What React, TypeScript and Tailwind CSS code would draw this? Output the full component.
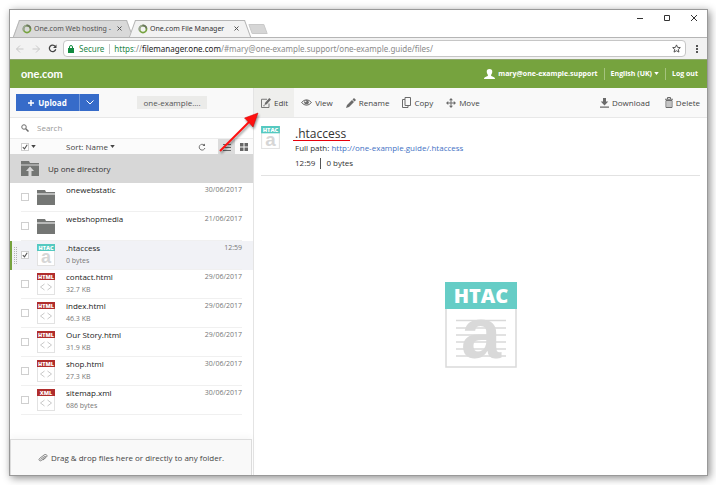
import { useState } from "react";
import clsx from "clsx";

interface FileEntry {
  name: string;
  size?: string;
  date: string;
  kind: "folder" | "htac" | "html" | "xml";
}

const FILES: FileEntry[] = [
  { name: "onewebstatic", date: "30/06/2017", kind: "folder" },
  { name: "webshopmedia", date: "21/06/2017", kind: "folder" },
  { name: ".htaccess", size: "0 bytes", date: "12:59", kind: "htac" },
  { name: "contact.html", size: "32.7 KB", date: "29/06/2017", kind: "html" },
  { name: "index.html", size: "46.3 KB", date: "29/06/2017", kind: "html" },
  { name: "Our Story.html", size: "31.9 KB", date: "29/06/2017", kind: "html" },
  { name: "shop.html", size: "27.3 KB", date: "30/06/2017", kind: "html" },
  { name: "sitemap.xml", size: "686 bytes", date: "30/06/2017", kind: "xml" },
];

const Caret = () => (
  <svg viewBox="0 0 6 4" className="h-[3px] w-[5px] shrink-0" fill="currentColor">
    <path d="M0 0h6L3 4z" />
  </svg>
);

const Favicon = () => (
  <svg viewBox="0 0 20 20" className="h-2.5 w-2.5 shrink-0" fill="none">
    <circle cx="10" cy="10" r="7" stroke="#76a33e" strokeWidth="3.500" />
    <path d="M3.500 13A7 7 0 0 1 9 3" stroke="#9aa395" strokeWidth="3.500" />
    <path d="M9 3A7 7 0 0 1 17 9" stroke="#6b7562" strokeWidth="3.500" />
  </svg>
);

const FolderIcon = () => (
  <svg viewBox="0 0 18 15" className="h-[15px] w-[18px]" fill="#747674">
    <path d="M0 0h8l1 2h9v1.500H0zM0 4.500h18V15H0z" />
  </svg>
);

const UpFolderIcon = () => (
  <svg viewBox="0 0 18 15" className="h-[15px] w-[18px]">
    <path d="M0 0h8l1 2h9v1.500H0zM0 4.500h18V15H0z" fill="#747674" />
    <path d="M9 5.500l4 4.500h-2.500v5h-3v-5H5z" fill="#d7d7d7" />
  </svg>
);

const CodeFileIcon = ({ label }: { label: string }) => (
  <svg viewBox="0 0 18 22" className="h-[22px] w-[18px]">
    <rect x=".5" y=".5" width="17" height="21" fill="#fff" stroke="#e2e2e2" />
    <rect width="18" height="7" fill="#b02d2d" />
    <text
      x="9"
      y="5.500"
      textAnchor="middle"
      fontSize="5.500"
      fontWeight="800"
      fill="#fff"
      className="font-['Open_Sans',sans-serif]"
    >
      {label}
    </text>
    <path d="M7.500 11L3.500 14l4 3M10.500 11l4 3-4 3" fill="none" stroke="#c9c9c9" />
  </svg>
);

const HtacIcon = () => (
  <svg viewBox="0 0 72 86" className="h-[86px] w-[72px] overflow-visible">
    <rect x="1" y="1" width="70" height="84" fill="#fff" stroke="#dadada" strokeWidth="1.500" />
    <rect width="72" height="27" fill="#66cdc6" />
    <text
      x="36"
      y="21"
      textAnchor="middle"
      fontSize="20"
      fontWeight="800"
      fill="#fff"
      className="font-['Open_Sans',sans-serif]"
    >
      HTAC
    </text>
    <path
      d="M11 38.500h50M11 46h50M11 53h50M11 60h50M11 67h50M11 74h50"
      stroke="#d9d9d9"
      strokeWidth="1.500"
    />
    <text
      x="36"
      y="76"
      textAnchor="middle"
      fontSize="72"
      fontWeight="700"
      fill="#d9d9d9"
      className="font-['Liberation_Sans',sans-serif]"
    >
      a
    </text>
  </svg>
);

const SmallHtacIcon = ({ className }: { className: string }) => (
  <svg viewBox="0 0 18 22" className={className}>
    <rect x=".5" y=".5" width="17" height="21" fill="#fff" stroke="#e2e2e2" />
    <rect width="18" height="7" fill="#55c9c0" />
    <text
      x="9"
      y="5.500"
      textAnchor="middle"
      fontSize="5.500"
      fontWeight="800"
      fill="#fff"
      className="font-['Open_Sans',sans-serif]"
    >
      HTAC
    </text>
    <text
      x="9"
      y="19"
      textAnchor="middle"
      fontSize="18"
      fontWeight="700"
      fill="#d6d6d6"
      className="font-['Liberation_Sans',sans-serif]"
    >
      a
    </text>
  </svg>
);

const EditIcon = () => (
  <svg viewBox="0 0 20 20" className="h-2.5 w-2.5" fill="none" stroke="#6b6b6b" strokeWidth="1.800">
    <path d="M12 2.500H1V19h15v-8" />
    <path d="M7 14l1.200-4.500L16.500 0 20 3l-8.500 9.500z" fill="#6b6b6b" stroke="none" />
    <path d="M4 15.500h4" strokeWidth="1.300" />
  </svg>
);

const ViewIcon = () => (
  <svg viewBox="0 0 22 14" className="h-[7px] w-[11px]">
    <path d="M1 7Q11-4 21 7 11 18 1 7z" fill="none" stroke="#6b6b6b" strokeWidth="2" />
    <circle cx="11" cy="6.500" r="4.500" fill="#6b6b6b" />
    <circle cx="9.500" cy="5" r="1.300" fill="#fff" />
  </svg>
);

const RenameIcon = () => (
  <svg viewBox="0 0 20 20" className="h-2.5 w-2.5" fill="#6b6b6b">
    <path d="M0 20l2-6L12 4l4 4L6 18zM13 3l3-3 4 4-3 3z" />
  </svg>
);

const CopyIcon = () => (
  <svg viewBox="0 0 18 22" className="h-[11px] w-[9px]" fill="none" stroke="#6b6b6b" strokeWidth="2">
    <path d="M6 1h11v16H6z" />
    <path d="M6 5H1v16h11v-4" />
  </svg>
);

const MoveIcon = () => (
  <svg viewBox="0 0 20 20" className="h-2.5 w-2.5" fill="#6b6b6b">
    <path d="M10 0l4 4.500h-3V9h4.500V6L20 10l-4.500 4v-3H11v4.500h3L10 20l-4-4.500h3V11H4.500v3L0 10l4.500-4v3H9V4.500H6z" />
  </svg>
);

const DownloadIcon = () => (
  <svg viewBox="0 0 18 20" className="h-2.5 w-[9px]" fill="#6b6b6b">
    <path d="M6 0h6v7h4.500L9 15 1.500 7H6zM0 17h18v2.500H0z" />
  </svg>
);

const DeleteIcon = () => (
  <svg viewBox="0 0 16 22" className="h-[11px] w-2" fill="none" stroke="#6b6b6b" strokeWidth="2">
    <path d="M0 4.500h16M5 4V1h6v3M2 7v14h12V7z" />
    <path d="M6 8v12M10 8v12" strokeWidth="1.500" />
  </svg>
);

const ACTIONS = [
  { label: "Edit", icon: <EditIcon /> },
  { label: "View", icon: <ViewIcon /> },
  { label: "Rename", icon: <RenameIcon /> },
  { label: "Copy", icon: <CopyIcon /> },
  { label: "Move", icon: <MoveIcon /> },
];

const Checkbox = ({
  label,
  checked,
  onChange,
}: {
  label: string;
  checked: boolean;
  onChange: () => void;
}) => (
  <label className="relative flex shrink-0">
    <input
      type="checkbox"
      aria-label={label}
      checked={checked}
      onChange={onChange}
      className="h-2 w-2 shrink-0 appearance-none border border-[#cfcfcf] bg-white"
    />
    {checked && (
      <svg
        viewBox="0 0 8 8"
        className="pointer-events-none absolute inset-0 h-2 w-2"
        fill="none"
        stroke="#555"
        strokeWidth="1.100"
      >
        <path d="M1.800 4.200l1.700 1.700 2.700-4.200" />
      </svg>
    )}
  </label>
);

const Tab = ({ title, active }: { title: string; active?: boolean }) => (
  <div
    className={clsx(
      "relative flex h-[17px] items-center pr-1 pl-[9px] text-[7px] leading-3",
      "before:absolute before:inset-y-0 before:left-[3px] before:w-1/2 before:-skew-x-[20deg] before:border-t before:border-l before:border-[#b5b5b5]",
      "after:absolute after:inset-y-0 after:right-[3px] after:w-1/2 after:skew-x-[20deg] after:border-t after:border-r after:border-[#b5b5b5]",
      active
        ? "z-10 -ml-1 w-[121px] text-[#333] before:bg-[#f2f2f2] after:bg-[#f2f2f2]"
        : "w-[120px] text-[#505050] before:bg-[#d9d9d9] after:bg-[#d9d9d9]",
    )}
  >
    <div className="relative z-10 flex min-w-0 flex-1 items-center gap-0.5">
      <Favicon />
      <span className="flex-1 whitespace-nowrap">{title}</span>
      <button aria-label="Close tab" className="w-3 text-[#555]">
        <svg viewBox="0 0 10 10" className="h-[5px] w-[5px]" stroke="currentColor" strokeWidth="2">
          <path d="M1 1l8 8M9 1L1 9" />
        </svg>
      </button>
    </div>
  </div>
);

const BrowserChrome = () => (
  <>
    <div className="flex h-7 shrink-0 items-start justify-between border-b border-[#b5b5b5] bg-white">
      <div className="mt-2.5 flex h-[17px] items-start pl-[3px] font-['Noto_Sans',sans-serif]">
        <Tab title="One.com Web hosting -" />
        <Tab title="One.com File Manager" active />
        <button
          aria-label="New tab"
          className="mt-1 h-2.5 w-4 skew-x-[20deg] rounded-[1px] border border-[#c9c9c9] bg-[#d6d6d6]"
        />
      </div>
      <div className="flex items-center gap-[19px] pt-1 pr-[9px] text-[#333]">
        <button aria-label="Minimise">
          <svg viewBox="0 0 8 8" className="h-2 w-2" stroke="currentColor">
            <path d="M1 4.500h6" />
          </svg>
        </button>
        <button aria-label="Maximise">
          <svg viewBox="0 0 8 8" className="h-2 w-2" stroke="currentColor" fill="none">
            <path d="M1.500 1.500h5v5h-5z" />
          </svg>
        </button>
        <button aria-label="Close">
          <svg viewBox="0 0 8 8" className="h-2 w-2" stroke="currentColor">
            <path d="M1 1l6 6M7 1L1 7" />
          </svg>
        </button>
      </div>
    </div>
    <div className="flex h-[21px] shrink-0 items-center bg-[#f2f2f2] pl-1.5 font-['Noto_Sans',sans-serif] text-[8px] leading-3">
      <div className="flex w-[47px] items-center gap-2">
        <button aria-label="Back" disabled>
          <svg viewBox="0 0 16 16" className="h-2 w-2" fill="none" stroke="#c8c8c8" strokeWidth="2">
            <path d="M15 8H1M8 1L1 8l7 7" />
          </svg>
        </button>
        <button aria-label="Forward" disabled>
          <svg viewBox="0 0 16 16" className="h-2 w-2" fill="none" stroke="#c8c8c8" strokeWidth="2">
            <path d="M1 8h14M8 1l7 7-7 7" />
          </svg>
        </button>
        <button aria-label="Reload">
          <svg viewBox="0 0 18 18" className="h-[9px] w-[9px]" fill="none" stroke="#444" strokeWidth="2.500">
            <path d="M14.500 5A6.500 6.500 0 1 0 15.500 10.500" />
            <path d="M17 1v7h-7z" fill="#444" stroke="none" />
          </svg>
        </button>
      </div>
      <div className="flex h-[17px] min-w-0 flex-1 items-center rounded-sm border border-[#c6c6c6] bg-white px-1">
        <svg viewBox="0 0 12 16" className="h-2 w-1.5 shrink-0" fill="#128a40">
          <path d="M0 6h12v10H0z" />
          <path d="M3 7V4a3 3 0 0 1 6 0v3" fill="none" stroke="#128a40" strokeWidth="2" />
        </svg>
        <span className="ml-[5px] text-[#27864a]">Secure</span>
        <span className="mr-1 ml-[5px] h-2.5 w-px bg-[#c6c6c6]" />
        <span className="flex-1 truncate text-[#8a8a8a]">
          <span className="text-[#27864a]">https</span>://
          <span className="text-[#222]">filemanager.one.com</span>
          /#mary@one-example.support/one-example.guide/files/
        </span>
        <button aria-label="Bookmark">
          <svg viewBox="0 0 20 20" className="h-[9px] w-[9px]" fill="none" stroke="#444" strokeWidth="2">
            <path d="M10 2l2.500 5.500 6 .500-4.500 4 1.500 6L10 15l-5.500 3L6 12 1.500 8l6-.500z" />
          </svg>
        </button>
      </div>
      <button aria-label="Menu" className="flex w-[21px] justify-center">
        <svg viewBox="0 0 2 8" className="h-2 w-0.5" fill="#555">
          <path d="M0 0h2v2H0zM0 3h2v2H0zM0 6h2v2H0z" />
        </svg>
      </button>
    </div>
  </>
);

const Header = () => (
  <header className="flex h-[29px] shrink-0 items-center justify-between border-t border-[#8fa66d] bg-[#76a33e] pr-[9px] pb-px pl-[11px] text-white">
    <a href="#" className="font-['Lato',sans-serif] text-[11px] leading-4 font-bold">
      one.com
    </a>
    <div className="flex items-center text-[7px] leading-3 font-bold">
      <svg viewBox="0 0 22 20" className="mr-[3px] h-2.5 w-[11px]" fill="currentColor">
        <path d="M11 0c4 0 6 2.500 5.500 6-.300 3-1.500 4.500-2.500 6 0 2 1 2 3 3 3 1 5 2 5 5H0c0-3 2-4 5-5 2-1 3-1 3-3-1-1.500-2.200-3-2.500-6C5 2.500 7 0 11 0z" />
      </svg>
      <span>mary@one-example.support</span>
      <span className="mx-1.5 h-3 w-px bg-[#a5c37e]" />
      <button className="flex items-center gap-0.5">
        English (UK) <Caret />
      </button>
      <span className="mx-1.5 h-3 w-px bg-[#a5c37e]" />
      <a href="#">Log out</a>
    </div>
  </header>
);

const Sidebar = () => {
  const [selected, setSelected] = useState<string[]>([".htaccess"]);

  const toggle = (name: string) => {
    setSelected((prev) =>
      prev.includes(name) ? prev.filter((n) => n !== name) : [...prev, name],
    );
  };

  return (
    <aside className="flex w-[244px] shrink-0 flex-col border-r border-[#e4e4e4]">
      <div className="flex h-[30px] shrink-0 items-center border-b border-[#e8e8e8] bg-[#f9f9f9] pl-1.5">
        <div className="flex h-[17px] w-[83px] bg-[#366bc9] text-[8px] leading-3 font-bold text-white">
          <button className="flex flex-1 items-center justify-center gap-1">
            <svg viewBox="0 0 6 6" className="h-1.5 w-1.5" stroke="currentColor" strokeWidth="1.500">
              <path d="M3 0v6M0 3h6" />
            </svg>
            Upload
          </button>
          <button
            aria-label="More upload options"
            className="flex w-5 items-center justify-center border-l border-[#6f96da]"
          >
            <svg viewBox="0 0 8 5" className="h-[5px] w-2" fill="none" stroke="currentColor">
              <path d="M.500.500L4 4 7.500.500" />
            </svg>
          </button>
        </div>
        <button className="ml-[38px] h-[13px] w-[70px] bg-[#ebebe9] text-[8px] leading-3 text-[#555]">
          one-example....
        </button>
      </div>
      <label className="flex h-[21px] shrink-0 items-center border-b border-[#ececec] pl-[11px]">
        <svg viewBox="0 0 16 16" className="h-2 w-2" fill="none" stroke="#6b6b6b" strokeWidth="2">
          <circle cx="6" cy="6" r="4.500" />
          <path d="M9.500 9.500L15 15" strokeWidth="3" />
        </svg>
        <input
          type="search"
          aria-label="Search"
          placeholder="Search"
          className="ml-2 min-w-0 flex-1 bg-transparent text-[8px] leading-3 outline-none placeholder:text-[#999]"
        />
      </label>
      <div className="flex h-[15px] shrink-0 items-center bg-[#fbfbfb] pl-[11px] text-[8px] leading-3 text-[#444]">
        <div className="flex w-[45px] items-center gap-0.5">
          <Checkbox
            label="Select all"
            checked={selected.length > 0}
            onChange={() => setSelected(selected.length ? [] : FILES.map((f) => f.name))}
          />
          <Caret />
        </div>
        <button className="flex items-center gap-0.5">
          Sort: Name <Caret />
        </button>
        <button aria-label="Refresh" className="mr-3 ml-auto">
          <svg viewBox="0 0 16 16" className="h-2 w-2" fill="none" stroke="#666" strokeWidth="1.800">
            <path d="M12 4A5.800 5.800 0 1 0 13.800 10" />
            <path d="M14 1v5H9z" fill="#666" stroke="none" />
          </svg>
        </button>
        <button
          aria-label="List view"
          className="flex h-full w-[17px] items-center justify-center bg-[#dcdcdc]"
        >
          <svg viewBox="0 0 8 8" className="h-2 w-2" stroke="#666">
            <path d="M0 1.500h8M0 4.500h8M0 7.500h8" />
          </svg>
        </button>
        <button aria-label="Grid view" className="flex h-full w-[18px] items-center justify-center">
          <svg viewBox="0 0 8 8" className="h-2 w-2" fill="#666">
            <path d="M0 0h3.500v3.500H0zM4.500 0H8v3.500H4.500zM0 4.500h3.500V8H0zM4.500 4.500H8V8H4.500z" />
          </svg>
        </button>
      </div>
      <button className="flex h-[29px] shrink-0 items-center gap-[9px] bg-[#d7d7d7] pl-[11px] text-[8px] leading-3 text-[#333]">
        <UpFolderIcon />
        Up one directory
      </button>
      <ul className="flex-1">
        {FILES.map((file) => {
          const isSelected = selected.includes(file.name);
          return (
            <li
              key={file.name}
              className={clsx(
                "relative h-[29px] pr-[11px] pl-[11px] leading-3",
                isSelected && "bg-[#f1f2f6]",
              )}
            >
              {isSelected && (
                <span className="absolute inset-y-0 left-0 flex w-2 items-center border-l-2 border-[#76a33e]">
                  <svg viewBox="0 0 4 18" className="ml-0.5 h-[18px] w-1" stroke="#b3b3b3" strokeDasharray="1 1">
                    <path d="M.500 0v18M2.500 0v18" />
                  </svg>
                </span>
              )}
              <div className="flex h-full items-center border-b border-[#f0f0f0]">
                <Checkbox
                  label={file.name}
                  checked={isSelected}
                  onChange={() => toggle(file.name)}
                />
                <span className="ml-2 flex w-[29px] shrink-0">
                  {file.kind === "folder" && <FolderIcon />}
                  {file.kind === "htac" && <SmallHtacIcon className="h-[22px] w-[18px]" />}
                  {file.kind === "html" && <CodeFileIcon label="HTML" />}
                  {file.kind === "xml" && <CodeFileIcon label="XML" />}
                </span>
                <div className="flex h-full min-w-0 flex-1 flex-col gap-px pt-px">
                  <p className="truncate text-[8px] text-[#222]">{file.name}</p>
                  {file.size && <p className="text-[7px] text-[#777]">{file.size}</p>}
                </div>
                <span className="self-start pt-px text-[7px] text-[#777]">{file.date}</span>
              </div>
            </li>
          );
        })}
      </ul>
      <div className="mr-[1px] flex h-9 shrink-0 items-center justify-center gap-[3px] border border-b-0 border-[#dcdcdc] bg-[#f9f9f9] text-[8px] leading-3 text-[#444] shadow-[0_-3px_6px_rgba(0,0,0,0.03)]">
        <svg viewBox="0 0 20 16" className="h-2 w-2.5" fill="none" stroke="#777" strokeWidth="1.800">
          <path d="M5 11l8-6c2-1 3 .500 1.500 2L7 13c-3 2-7-1-4-4l9-7c4-3 8 1 5 4l-7 6" />
        </svg>
        Drag &amp; drop files here or directly to any folder.
      </div>
    </aside>
  );
};

const Preview = () => (
  <main className="flex min-w-0 flex-1 flex-col">
    <div className="flex h-[30px] shrink-0 items-center border-b border-[#e8e8e8] bg-[#f9f9f9] pr-[7px] text-[8px] leading-3 text-[#444]">
      {ACTIONS.map((action) => (
        <button
          key={action.label}
          className={clsx(
            "flex h-full items-center gap-[3px] pr-1.5 pl-[7px]",
            action.label === "Edit" && "bg-[#efefed]",
          )}
        >
          {action.icon}
          {action.label}
        </button>
      ))}
      <button className="ml-auto flex items-center gap-[3px]">
        <DownloadIcon />
        Download
      </button>
      <button className="ml-[15px] flex items-center gap-[3px]">
        <DeleteIcon />
        Delete
      </button>
    </div>
    <section className="mr-[7px] ml-[7px] flex gap-[15px] border-b border-[#e2e2e2] pt-2 pb-1.5 text-[8px] leading-3 text-[#333]">
      <span>
        <SmallHtacIcon className="h-[23px] w-[19px]" />
      </span>
      <div>
        <h1 className="relative w-fit text-[12px] leading-4 text-[#333] after:absolute after:-right-1 after:bottom-[1px] after:-left-0.5 after:h-px after:bg-red-600">
          .htaccess
        </h1>
        <p>
          Full path:{" "}
          <a href="http://one-example.guide/.htaccess" className="text-[#4472c4]">
            http://one-example.guide/.htaccess
          </a>
        </p>
        <p className="mt-[3px] flex items-center">
          12:59
          <span className="mx-[5px] h-[11px] w-px bg-[#555]" />0 bytes
        </p>
      </div>
    </section>
    <div className="flex flex-1 items-center justify-center pb-0.5">
      <HtacIcon />
    </div>
  </main>
);

const App = () => (
  <div className="flex min-h-screen flex-col bg-white pt-[9px] pr-2 pb-[9px] pl-[9px] font-['Open_Sans',sans-serif]">
    <div className="flex flex-1 flex-col border border-[#999] bg-white shadow-[2px_2px_8px_rgba(0,0,0,0.45)]">
      <BrowserChrome />
      <Header />
      <div className="relative flex flex-1">
        <Sidebar />
        <Preview />
        <svg
          viewBox="0 0 44 44"
          className="pointer-events-none absolute top-6 left-[206px] h-11 w-11 drop-shadow-[1px_2px_1px_rgba(0,0,0,0.4)]"
        >
          <path d="M4 39L34 9" stroke="#ff1010" strokeWidth="2" />
          <path d="M42 1l-5 14-4-4.500L28.500 6z" fill="#ff1010" stroke="#c00" strokeWidth=".500" />
        </svg>
      </div>
    </div>
  </div>
);

export default App;
